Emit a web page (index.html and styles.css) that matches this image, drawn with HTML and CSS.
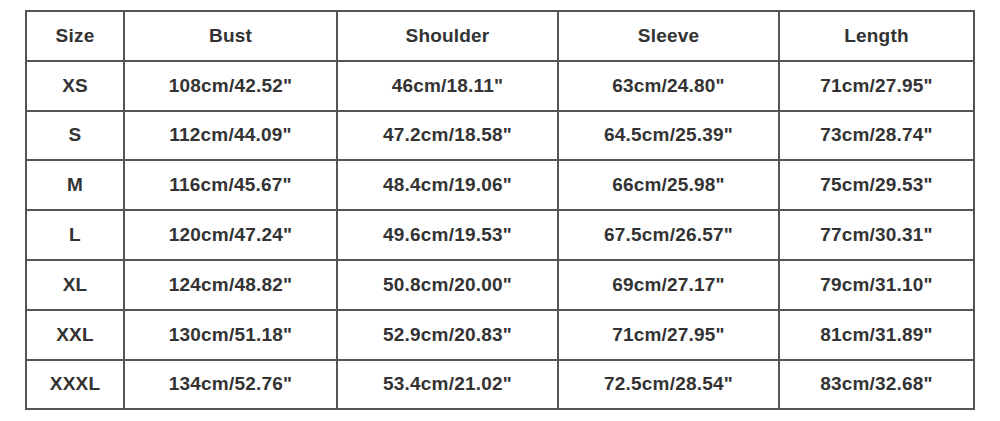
FILE: index.html
```html
<!DOCTYPE html>
<html>
<head>
<meta charset="utf-8">
<link rel="stylesheet" href="styles.css">
</head>
<body>
<div class="wrap">
<table class="size-table">
<colgroup>
<col class="c1"><col class="c2"><col class="c3"><col class="c4"><col class="c5">
</colgroup>
<tr><th>Size</th><th>Bust</th><th>Shoulder</th><th>Sleeve</th><th>Length</th></tr>
<tr><td>XS</td><td>108cm/42.52"</td><td>46cm/18.11"</td><td>63cm/24.80"</td><td>71cm/27.95"</td></tr>
<tr><td>S</td><td>112cm/44.09"</td><td>47.2cm/18.58"</td><td>64.5cm/25.39"</td><td>73cm/28.74"</td></tr>
<tr><td>M</td><td>116cm/45.67"</td><td>48.4cm/19.06"</td><td>66cm/25.98"</td><td>75cm/29.53"</td></tr>
<tr><td>L</td><td>120cm/47.24"</td><td>49.6cm/19.53"</td><td>67.5cm/26.57"</td><td>77cm/30.31"</td></tr>
<tr><td>XL</td><td>124cm/48.82"</td><td>50.8cm/20.00"</td><td>69cm/27.17"</td><td>79cm/31.10"</td></tr>
<tr><td>XXL</td><td>130cm/51.18"</td><td>52.9cm/20.83"</td><td>71cm/27.95"</td><td>81cm/31.89"</td></tr>
<tr><td>XXXL</td><td>134cm/52.76"</td><td>53.4cm/21.02"</td><td>72.5cm/28.54"</td><td>83cm/32.68"</td></tr>
</table>
</div>
</body>
</html>
```
FILE: styles.css
```css
html, body {
  margin: 0;
  padding: 0;
  background: #ffffff;
}
.wrap {
  padding: 10px 0 0 25px;
}
.size-table {
  border-collapse: collapse;
  table-layout: fixed;
  width: 948px;
  font-family: "Liberation Sans", Arial, sans-serif;
  font-weight: bold;
  font-size: 19px;
  letter-spacing: 0.2px;
  color: #333333;
}
.c1 { width: 98px; }
.c2 { width: 213px; }
.c3 { width: 221px; }
.c4 { width: 221px; }
.c5 { width: 195px; }
.size-table th, .size-table td {
  border: 2px solid #555555;
  height: 47.8px;
  padding: 0;
  text-align: center;
  vertical-align: middle;
  font-weight: bold;
}
```
